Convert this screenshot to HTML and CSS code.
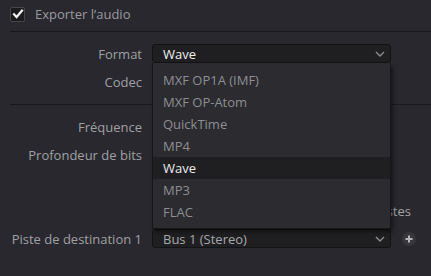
FILE: index.html
```html
<!DOCTYPE html>
<html lang="fr">
<head>
    <meta charset="UTF-8">
    <title>Exporter l'audio</title>
    <link rel="stylesheet" href="styles.css">
</head>
<body>
    <div class="panel">
        <!-- Audio export toggle -->
        <div class="header">
            <span class="checkbox checked">
                <svg width="12" height="12" viewBox="0 0 12 12"><path d="M2 6.2 L4.6 9 L10 2.6" fill="none" stroke="#f2f2f2" stroke-width="2.2" stroke-linecap="square"/></svg>
            </span>
            <span class="header-label">Exporter l’audio</span>
        </div>

        <div class="section first">
            <div class="row">
                <label class="label">Format</label>
                <div class="select active">
                    <span class="value">Wave</span>
                    <svg class="chevron" width="10" height="6" viewBox="0 0 10 6"><path d="M1 1 L5 5 L9 1" fill="none" stroke="#8c8c90" stroke-width="1.4"/></svg>
                </div>
            </div>
            <div class="row">
                <label class="label">Codec</label>
                <div class="select"></div>
            </div>
        </div>

        <div class="section">
            <div class="row">
                <label class="label">Fréquence</label>
                <div class="select"></div>
            </div>
            <div class="row">
                <label class="label">Profondeur de bits</label>
                <div class="select"></div>
            </div>
            <div class="row"></div>
            <div class="row">
                <span></span>
                <span class="plain wide">Rendu des pistes</span>
            </div>
            <div class="row">
                <label class="label">Piste de destination 1</label>
                <div class="select">
                    <span class="value">Bus 1 (Stereo)</span>
                    <svg class="chevron" width="10" height="6" viewBox="0 0 10 6"><path d="M1 1 L5 5 L9 1" fill="none" stroke="#8c8c90" stroke-width="1.4"/></svg>
                </div>
                <span class="add-btn">
                    <svg width="10" height="10" viewBox="0 0 10 10"><path d="M5 1.5 V8.5 M1.5 5 H8.5" stroke="#b4b4b8" stroke-width="2"/></svg>
                </span>
            </div>
        </div>

        <!-- Open format menu -->
        <ul class="menu">
            <li>MXF OP1A (IMF)</li>
            <li>MXF OP-Atom</li>
            <li>QuickTime</li>
            <li>MP4</li>
            <li class="selected">Wave</li>
            <li>MP3</li>
            <li>FLAC</li>
        </ul>
    </div>
</body>
</html>
```

FILE: styles.css
```css
/* Global Styles */
body {
    margin: 0;
    background: #28282e;
    font-family: 'Open Sans', 'Noto Sans', sans-serif;
    font-size: 13px;
    color: #a3a3a6;
    overflow: hidden;
}

.panel {
    position: relative;
    width: 431px;
    height: 276px;
}

/* Header with checkbox */
.header {
    display: flex;
    align-items: center;
    height: 31px;
    padding-left: 10px;
    box-sizing: border-box;
    padding-bottom: 3px;
}

.checkbox {
    width: 13px;
    height: 13px;
    border: 1px solid #45454a;
    border-radius: 2px;
    background: #1b1b1d;
    display: flex;
    align-items: center;
    justify-content: center;
    margin-right: 10px;
}

.header-label {
    color: #9a9a9e;
}

/* Sections */
.section {
    margin-left: 10px;
    border-top: 1px solid #19191b;
    padding: 12px 0 13px;
    display: flex;
    flex-direction: column;
    gap: 9px;
}

.row {
    display: grid;
    grid-template-columns: 132px 239px 16px;
    column-gap: 10px;
    align-items: center;
    height: 19px;
}

.label {
    text-align: right;
    color: #a0a0a4;
    white-space: nowrap;
    margin-left: -10px;
}

.select {
    position: relative;
    height: 19px;
    box-sizing: border-box;
    background: #1f1f22;
    border: 1px solid #131315;
    border-radius: 3px;
    display: flex;
    align-items: center;
    padding-left: 10px;
}

.select .value {
    color: #a8a8ab;
}

.select.active .value {
    color: #f0f0f0;
}

.chevron {
    position: absolute;
    right: 5px;
    top: 6px;
}

.plain {
    white-space: nowrap;
}

.wide {
    grid-column: 2 / 4;
    justify-self: end;
    margin-right: 6px;
}

.add-btn {
    width: 14px;
    height: 14px;
    border-radius: 50%;
    background: #36363b;
    display: flex;
    align-items: center;
    justify-content: center;
    margin-left: 1px;
}

/* Dropdown menu */
.menu {
    position: absolute;
    left: 152px;
    top: 63px;
    width: 239px;
    margin: 0;
    padding: 6px 0 5px;
    list-style: none;
    background: #2b2b30;
    border: 1px solid #161618;
    border-top: none;
    box-sizing: border-box;
    box-shadow: 2px 3px 4px rgba(0, 0, 0, 0.45);
}

.menu li {
    height: 22px;
    line-height: 22px;
    padding-left: 10px;
    color: #8e8e92;
}

.menu li.selected {
    background: #1f1f22;
    color: #ececee;
}
```
